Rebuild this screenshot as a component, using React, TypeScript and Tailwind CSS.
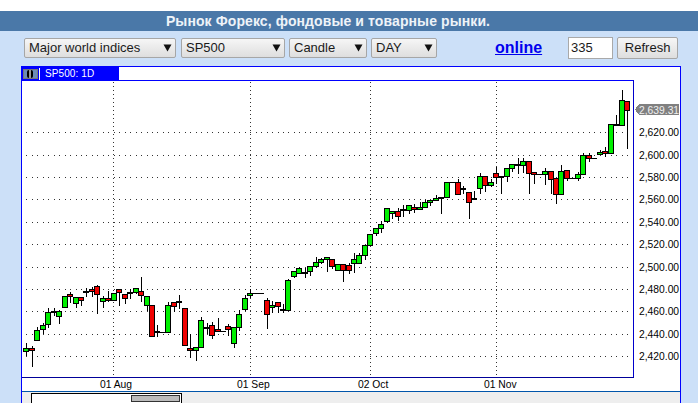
const candles: [string, number, number?, number?, number?][] = [
  ["g",348,351,343,355],["r",348,350,346,366],["g",330,340,327,340],["g",325,329,323,333],["g",312,324,308,327],
  ["d",312,312,308,315],["g",311,316,310,323],["g",296,307,296,307],["r",294,296,292,302],["g",297,303,297,307],
  ["r",297,300,297,305],["d",292,292,288,296],["r",289,291,287,296],["r",286,294,285,313],["g",298,301,296,307],
  ["r",298,300,291,301],["g",293,300,293,300],["r",289,292,289,305],["r",294,298,294,303],["d",293,293,289,298],
  ["g",288,292,288,293],["r",291,295,277,301],["g",296,305,296,310],["r",305,336,305,336],["d",332,332,325,336],
  ["f",332],["g",305,332,302,332],["r",302,306,302,311],["d",302,302,295,308],["r",308,345,308,345],
  ["r",348,350,334,357],["g",347,350,347,360],["g",320,347,317,347],["d",328,328,323,333],["r",325,335,322,338],
  ["r",329,331,318,331],["f",331],["r",326,329,324,335],["g",327,343,327,347],["g",314,327,310,330],
  ["g",298,309,295,310],["g",293,295,289,297],["f",293],["f",293],["r",300,314,298,328],
  ["g",305,307,301,312],["r",302,306,302,312],["d",310,310,304,312],["g",280,310,279,310],["g",271,276,271,277],
  ["g",268,273,267,273],["d",273,273,268,277],["g",266,271,266,275],["g",262,266,257,267],["g",259,262,258,263],
  ["g",257,259,257,271],["r",259,266,259,268],["g",264,270,264,270],["r",264,270,264,281],["r",265,270,263,273],
  ["g",259,263,253,272],["g",255,263,253,263],["g",245,255,245,259],["g",234,245,234,245],["g",228,233,228,235],
  ["g",224,228,221,232],["g",208,221,208,222],["g",211,213,211,218],["r",211,216,208,220],["d",210,210,205,216],
  ["g",205,210,205,213],["r",207,209,204,212],["g",207,209,202,209],["g",202,207,200,207],["g",200,202,200,205],
  ["g",198,200,195,200],["d",198,198,198,213],["g",182,197,182,197],["f",182],["r",182,194,179,194],
  ["d",189,189,186,193],["r",192,202,192,218],["d",199,199,191,199],["g",176,188,173,193],["r",176,185,176,191],
  ["g",182,185,179,186],["r",173,177,167,183],["d",177,177,177,193],["g",168,176,168,181],["g",164,168,164,171],
  ["d",165,165,158,173],["g",161,165,158,172],["r",161,173,161,193],["r",172,174,172,183],["f",174],
  ["g",171,174,168,184],["r",171,179,171,193],["r",178,194,178,203],["g",171,194,165,194],["r",170,178,170,180],
  ["f",178],["g",174,178,172,180],["g",155,174,153,174],["r",155,158,153,161],["f",158],
  ["g",152,154,150,154],["r",151,153,147,156],["g",124,153,124,153],["d",125,125,115,125],["g",100,125,90,125],
  ["r",101,110,101,148],
];

const wickX = (i: number) => Math.round(26.4 + 5.46 * i);
const prices = ["2,420.00","2,440.00","2,460.00","2,480.00","2,500.00","2,520.00","2,540.00","2,560.00","2,580.00","2,600.00","2,620.00"];
const gridY = prices.map((_, k) => Math.round(356 - 22.37 * k));
const vGrid = [113, 250, 370, 496];
const dates: [string, number][] = [["01 Aug", 100], ["01 Sep", 237], ["02 Oct", 358], ["01 Nov", 484]];

function Arrow() {
  return (
    <svg width="9" height="8" viewBox="0 0 9 8" className="shrink-0">
      <path d="M0.5 0.5H8.5L4.5 7.5Z" fill="#111" />
    </svg>
  );
}

function Select({ label, className }: { label: string; className: string }) {
  return (
    <div className={`flex h-[20px] items-center justify-between rounded-[2px] border border-[#a6a6a6] bg-gradient-to-b from-[#f6f6f6] to-[#dedede] pl-1 pr-[3px] text-[13px] text-[#1a1a1a] ${className}`}>
      <span>{label}</span>
      <Arrow />
    </div>
  );
}

function Chart() {
  return (
    <svg width="658" height="311" viewBox="22 80 658 311" className="block" shapeRendering="crispEdges">
      <rect x="22" y="80" width="612" height="1" fill="#0000ff" />
      <rect x="633" y="80" width="1" height="298" fill="#0000cc" />
      <rect x="22" y="377" width="612" height="1" fill="#000099" />
      {gridY.map((y) =>
        candles.map((_, i) => <rect key={`${y}-${i}`} x={wickX(i)} y={y} width="1" height="1" fill="#333" />)
      )}
      {vGrid.map((x) =>
        Array.from({ length: 74 }, (_, k) => <rect key={`${x}-${k}`} x={x} y={82 + k * 4} width="1" height="1" fill="#333" />)
      )}
      {candles.map((c, i) => {
        const w = wickX(i);
        const [t, top, bot, hi, lo] = c;
        if (t === "f") return <rect key={i} x={w - 3} y={top} width="6" height="1" fill="#000" />;
        return (
          <g key={i}>
            <rect x={w} y={hi} width="1" height={(lo as number) - (hi as number) + 1} fill="#000" />
            {t === "d" ? (
              <rect x={w - 3} y={top - 1} width="6" height="2" fill="#000" />
            ) : (
              <rect
                x={w - 2.5}
                y={top + 0.5}
                width="5"
                height={(bot as number) - top}
                fill={t === "g" ? "#00f000" : "#f00000"}
                stroke="#000"
                strokeWidth="1"
              />
            )}
          </g>
        );
      })}
      <g fontFamily="'Liberation Sans', sans-serif" fontSize="10.3" fill="#000" shapeRendering="auto">
        {prices.map((p, k) => (
          <text key={p} x="639" y={gridY[k] + 4}>{p}</text>
        ))}
        {dates.map(([d, x]) => (
          <text key={d} x={x} y="388">{d}</text>
        ))}
      </g>
      <path d="M635 109.5L639 104H679V115H639Z" fill="#808080" />
      <text x="639" y="113.5" fontFamily="'Liberation Sans', sans-serif" fontSize="10.3" fill="#f0f0f0" shapeRendering="auto">2,639.31</text>
    </svg>
  );
}

export default function App() {
  return (
    <div className="h-[403px] w-[698px] overflow-hidden bg-white font-['Liberation_Sans',sans-serif]">
      <div className="mt-[11px] flex h-[20px] items-center justify-center bg-[#4a78a8] pr-[42px] text-[14px] font-bold tracking-[0.1px] text-[#eef3f8]">
        Рынок Форекс, фондовые и товарные рынки.
      </div>
      <div className="h-[372px] bg-[#cce0f8] pt-[6px]">
        <div className="flex h-[22px] items-center pl-[24px]">
          <Select label="Major world indices" className="w-[152px]" />
          <Select label="SP500" className="ml-[5px] w-[104px]" />
          <Select label="Candle" className="ml-[4px] w-[78px]" />
          <Select label="DAY" className="ml-[4px] w-[66px]" />
          <a href="#" className="ml-[58px] text-[16px] font-bold text-[#0000ee] underline">online</a>
          <div className="ml-[26px] flex h-[22px] w-[45px] items-center border border-[#a9a9a9] bg-white pl-[2px] text-[13px] text-[#1a1a1a]">335</div>
          <button className="ml-[4px] h-[22px] w-[61px] rounded-[2px] border border-[#a6a6a6] bg-gradient-to-b from-[#f6f6f6] to-[#dedede] text-[13px] text-[#1a1a1a]">Refresh</button>
        </div>
        <div className="ml-[21px] mt-[7px] h-[345px] w-[660px] border border-[#0000ff] bg-white">
          <div className="flex h-[13px] w-[97px] items-center bg-[#0000ff]">
            <div className="ml-[1px] flex h-[10px] w-[15px] items-center border border-[#777] bg-[#6d8cb8]">
              <div className="ml-[3px] h-[8px] w-[6px] rounded-[2px] border-x-2 border-black bg-[#999]" />
            </div>
            <div className="ml-[1px] h-[12px] w-px bg-white" />
            <span className="ml-[5px] text-[10px] tracking-[0.1px] text-white">SP500: 1D</span>
          </div>
          <Chart />
          <div className="h-[30px] border-t border-[#0055aa] bg-[#eeeeee] pl-[9px] pt-[1px]">
            <div className="flex h-[12px] w-[151px] justify-end border border-black bg-white p-px">
              <div className="h-[7px] w-[49px] border border-[#333] bg-[#bbbbbb]" />
            </div>
          </div>
        </div>
      </div>
    </div>
  );
}
